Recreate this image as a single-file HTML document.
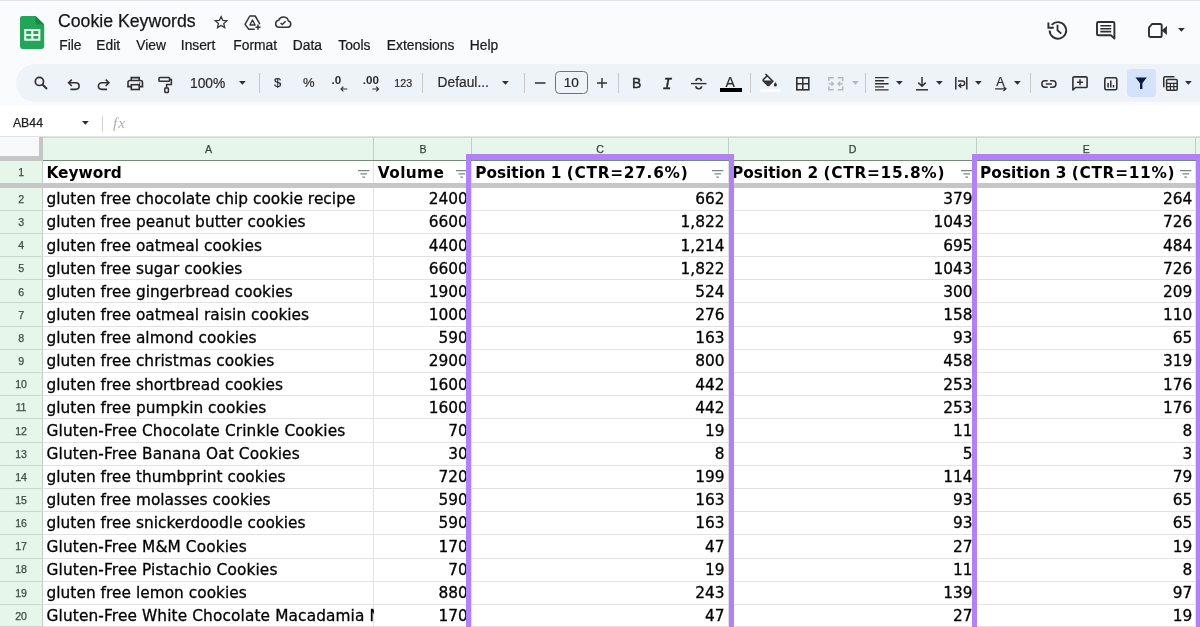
<!DOCTYPE html>
<html lang="en"><head><meta charset="utf-8"><title>Cookie Keywords - Google Sheets</title>
<style>
html,body{margin:0;padding:0}
body{width:1200px;height:627px;overflow:hidden;position:relative;background:#f9fbfd;font-family:"Liberation Sans",sans-serif;color:#1f1f1f}
#top,#grid{position:absolute;left:0;top:0;width:1200px;height:627px;overflow:hidden}
#top,#grid{will-change:transform}
.abs{position:absolute}
.topline{position:absolute;left:0;top:0;width:1200px;height:1.2px;background:#e2e3e6}
.title{position:absolute;left:58px;top:9.5px;font-size:17.7px;line-height:22px;color:#161616;-webkit-text-stroke:0.25px #161616;white-space:nowrap}
.menu{position:absolute;top:37.5px;font-size:13.8px;line-height:16px;color:#191919;-webkit-text-stroke:0.22px #191919;white-space:nowrap}
.tb{position:absolute;left:15.5px;top:63.8px;width:1300px;height:38.7px;border-radius:19.5px;background:#eef2f9}
.tbt{position:absolute;font-size:13.6px;line-height:16px;color:#2a2a2a;-webkit-text-stroke:0.2px #2a2a2a;white-space:nowrap}
.sep{position:absolute;top:72.5px;width:1px;height:20px;background:#c7c7c7}
.fbar{position:absolute;left:0;top:104.5px;width:1200px;height:32.5px;background:#fff;box-sizing:border-box;border-bottom:1px solid #e1e3e6}
svg{position:absolute;overflow:visible}
.chdr{position:absolute;left:0;width:1200px;background:#e6f6ea;box-sizing:border-box;border-top:1px solid #d0dbd3}
.corner{position:absolute;left:0;background:#f8f9fa}
.cl{position:absolute;text-align:center;font-size:10.6px;line-height:24px;color:#38433b;-webkit-text-stroke:0.25px #38433b}
.cvl{position:absolute;width:1px;background:#bfcfc2}
.rhdr{position:absolute;left:0;background:#e6f6ea;border-right:1px solid #bfcfc2;box-sizing:border-box}
.vl{position:absolute;width:1px;background:#e2e2e2}
.hl{position:absolute;left:0;width:1200px;height:1px;background:#e2e2e2}
.rn{position:absolute;left:0;width:42px;text-align:center;font-size:10.6px;color:#3f4a42;letter-spacing:-0.25px;-webkit-text-stroke:0.25px #3f4a42}
.rhl{position:absolute;left:0;width:43px;height:1px;background:#c9d8cc}
.c{position:absolute;box-sizing:border-box;font-family:"DejaVu Sans","Liberation Sans",sans-serif;font-size:15.35px;color:#000;white-space:nowrap;overflow:hidden}
.c.t{padding-left:3.5px;text-align:left;letter-spacing:0.04px;-webkit-text-stroke:0.3px #000}
.c.g{letter-spacing:0.125px}
.c.n{padding-right:4px;text-align:right;-webkit-text-stroke:0.3px #000}
.c.h{padding-left:3.5px;font-weight:bold;text-align:left}
.fi{position:absolute}
.fz{position:absolute;background:#c6c6c6}
.hbl{position:absolute;height:1px;background:#738a79}
.pb{position:absolute;box-sizing:border-box;border:5.9px solid #b081f7;border-top-width:6.5px}
.white{position:absolute;left:43px;top:160px;width:1157px;height:467px;background:#fff}
.ar{margin-left:0.4px;margin-top:0.2px}
.w{letter-spacing:0.72px}

</style></head><body>
<div id="top">
<div class="topline"></div>
<!-- sheets logo -->
<svg style="left:19.8px;top:16px" width="24.2" height="33" viewBox="0 0 24.2 33">
 <path d="M2.4 0H15.6L24.2 8.6V30.6A2.4 2.4 0 0 1 21.8 33H2.4A2.4 2.4 0 0 1 0 30.6V2.4A2.4 2.4 0 0 1 2.4 0Z" fill="#22a559"/>
 <path d="M15.6 0L24.2 8.6H17.8A2.2 2.2 0 0 1 15.6 6.4Z" fill="#17893f"/>
 <path d="M4.2 13H20.4V24.8H4.2ZM6.3 15.1V17.9H11.2V15.1ZM13.4 15.1V17.9H18.3V15.1ZM6.3 20V22.7H11.2V20ZM13.4 20V22.7H18.3V20Z" fill="#e9f6ee" fill-rule="evenodd"/>
</svg>
<div class="title">Cookie Keywords</div>
<!-- star -->
<svg style="left:214.2px;top:15.2px" width="14.2" height="13.6" viewBox="0 0 24 23"><path d="M12 2.6L14.8 9.1L21.9 9.7L16.5 14.4L18.1 21.3L12 17.6L5.9 21.3L7.5 14.4L2.1 9.7L9.2 9.1Z" fill="none" stroke="#333" stroke-width="2.1" stroke-linejoin="miter"/></svg>
<!-- drive add -->
<svg style="left:243.5px;top:14.5px" width="18" height="16" viewBox="0 0 18 16"><path d="M10.2 14.3H4.8L1 9.4L5.8 1H11.2L15.6 8.6" fill="none" stroke="#333" stroke-width="1.5" stroke-linejoin="round" stroke-linecap="round"/><path d="M5.9 10L8.5 5L11.1 10Z" fill="none" stroke="#333" stroke-width="1.4" stroke-linejoin="round"/><path d="M14 9.6V14.8M11.4 12.2H16.6" fill="none" stroke="#333" stroke-width="1.5"/></svg>
<!-- cloud done -->
<svg style="left:274px;top:16px" width="18" height="12" viewBox="0 0 18 12"><path d="M4.6 11.2H13.9A3.1 3.1 0 0 0 14.4 5.1A5.1 5.1 0 0 0 4.7 4.2A3.55 3.55 0 0 0 4.6 11.2Z" fill="none" stroke="#333" stroke-width="1.5" stroke-linejoin="round"/><path d="M6.6 6.9L8.3 8.6L11.6 5.2" fill="none" stroke="#333" stroke-width="1.4"/></svg>

<div class="menu" style="left:59.3px">File</div>
<div class="menu" style="left:96.3px">Edit</div>
<div class="menu" style="left:136.3px">View</div>
<div class="menu" style="left:180.8px">Insert</div>
<div class="menu" style="left:233.3px">Format</div>
<div class="menu" style="left:292.8px">Data</div>
<div class="menu" style="left:338.3px">Tools</div>
<div class="menu" style="left:386.8px">Extensions</div>
<div class="menu" style="left:469.8px">Help</div>

<!-- history -->
<svg style="left:1046px;top:19.5px" width="21" height="20" viewBox="0 0 21 20"><path d="M3.6 10.6A8.3 8.3 0 1 0 5.7 4.9" fill="none" stroke="#2e2e2e" stroke-width="1.9"/><path d="M2.4 2.4V7.8H7.8" fill="none" stroke="#2e2e2e" stroke-width="1.9"/><path d="M11.5 4.8V10.3L15.3 13.6" fill="none" stroke="#2e2e2e" stroke-width="1.8"/></svg>
<!-- comment -->
<svg style="left:1095.5px;top:20.8px" width="19.5" height="19" viewBox="0 0 19.5 19"><path d="M1 2.4A1.4 1.4 0 0 1 2.4 1H17A1.4 1.4 0 0 1 18.4 2.4V17.6L14.9 14.3H2.4A1.4 1.4 0 0 1 1 12.9Z" fill="none" stroke="#2e2e2e" stroke-width="1.9" stroke-linejoin="round"/><path d="M4.3 4.8H15.2M4.3 7.7H15.2M4.3 10.6H15.2" stroke="#2e2e2e" stroke-width="1.55"/></svg>
<!-- video -->
<svg style="left:1148px;top:22.8px" width="19.5" height="15" viewBox="0 0 19.5 15"><path d="M1 4.6L4 1H12.1A1.6 1.6 0 0 1 13.7 2.6V12.4A1.6 1.6 0 0 1 12.1 14H2.6A1.6 1.6 0 0 1 1 12.4Z" fill="none" stroke="#2e2e2e" stroke-width="1.9" stroke-linejoin="round"/><path d="M13.7 7.5L18.9 2.9V12.1Z" fill="#2e2e2e"/></svg>
<svg style="left:1177.5px;top:28px" width="6.8" height="3.7" viewBox="0 0 8 4.2"><path d="M0 0H8L4 4.2Z" fill="#2e2e2e"/></svg>

<!-- toolbar -->
<div class="tb"></div>
<div class="fbar"></div>
<!-- search -->
<svg style="left:33.5px;top:75.5px" width="14" height="14" viewBox="0 0 14 14"><circle cx="5.4" cy="5.4" r="4.1" fill="none" stroke="#303030" stroke-width="1.7"/><path d="M8.5 8.5L13 13" stroke="#303030" stroke-width="1.9"/></svg>
<!-- undo -->
<svg style="left:67px;top:77.5px" width="13.5" height="13" viewBox="0 0 13.5 13"><path d="M2 4.8H8.8A3.3 3.3 0 0 1 8.8 11.4H3.4" fill="none" stroke="#303030" stroke-width="1.6"/><path d="M4.8 1.6L1.6 4.8L4.8 8" fill="none" stroke="#303030" stroke-width="1.6"/></svg>
<!-- redo -->
<svg style="left:97px;top:77.5px" width="13.5" height="13" viewBox="0 0 13.5 13"><path d="M11.5 4.8H4.7A3.3 3.3 0 0 0 4.7 11.4H10.1" fill="none" stroke="#303030" stroke-width="1.6"/><path d="M8.7 1.6L11.9 4.8L8.7 8" fill="none" stroke="#303030" stroke-width="1.6"/></svg>
<!-- print -->
<svg style="left:127px;top:76.3px" width="16.5" height="14.5" viewBox="0 0 16.5 14.5"><path d="M4.3 4.6V1.6H12.2V4.6" fill="none" stroke="#303030" stroke-width="1.6"/><path d="M4 10.6H1V6.4A1.9 1.9 0 0 1 2.9 4.5H13.6A1.9 1.9 0 0 1 15.5 6.4V10.6H12.5" fill="none" stroke="#303030" stroke-width="1.6"/><rect x="4.3" y="8.7" width="7.9" height="4.8" fill="none" stroke="#303030" stroke-width="1.6"/><circle cx="12.8" cy="7" r="0.8" fill="#303030"/></svg>
<!-- paint format -->
<svg style="left:158px;top:75.5px" width="14.5" height="17.5" viewBox="0 0 14.5 17.5"><rect x="1" y="1.5" width="10.6" height="3.8" rx="0.9" fill="none" stroke="#303030" stroke-width="1.6"/><path d="M11.6 3.4H13.4V8.6H8.6V12" fill="none" stroke="#303030" stroke-width="1.5"/><rect x="6.8" y="12" width="3.6" height="4.4" rx="0.7" fill="none" stroke="#303030" stroke-width="1.5"/></svg>
<div class="tbt" style="left:190px;top:76.4px;font-size:13.8px">100%</div>
<svg class="ar" style="left:238.2px;top:81px" width="6.8" height="3.7" viewBox="0 0 8 4.2"><path d="M0 0H8L4 4.2Z" fill="#303030"/></svg>
<div class="sep" style="left:258.7px"></div>
<div class="tbt" style="left:274px;top:74.5px;font-size:13px">$</div>
<div class="tbt" style="left:303px;top:74.5px;font-size:13px">%</div>
<div class="tbt" style="left:331.5px;top:72px;font-size:11.6px;font-weight:bold;-webkit-text-stroke:0">.0</div>
<svg style="left:340.3px;top:85.5px" width="7.6" height="6" viewBox="0 0 9 7"><path d="M8.6 3.5H1.4M4 0.8L1.2 3.5L4 6.2" fill="none" stroke="#303030" stroke-width="1.3"/></svg>
<div class="tbt" style="left:362.8px;top:72px;font-size:11.6px;font-weight:bold;-webkit-text-stroke:0">.00</div>
<svg style="left:371.5px;top:85.5px" width="7.6" height="6" viewBox="0 0 9 7"><path d="M0.4 3.5H7.6M5 0.8L7.8 3.5L5 6.2" fill="none" stroke="#303030" stroke-width="1.3"/></svg>
<div class="tbt" style="left:394.3px;top:74.8px;font-size:10.7px">123</div>
<div class="sep" style="left:422px"></div>
<div class="tbt" style="left:437.5px;top:74.5px;font-size:13.8px">Defaul...</div>
<svg class="ar" style="left:501.9px;top:81px" width="6.8" height="3.7" viewBox="0 0 8 4.2"><path d="M0 0H8L4 4.2Z" fill="#303030"/></svg>
<div class="sep" style="left:523.7px"></div>
<svg style="left:535px;top:82px" width="10.5" height="2" viewBox="0 0 10.5 2"><path d="M0 1H10.5" stroke="#303030" stroke-width="1.5"/></svg>
<div class="abs" style="left:555px;top:70.9px;width:32.7px;height:23.4px;box-sizing:border-box;border:1px solid #6f7276;border-radius:4.5px"></div>
<div class="tbt" style="left:555px;top:75px;width:32.7px;text-align:center;font-size:13.6px;color:#1f1f1f">10</div>
<svg style="left:597px;top:78px" width="10" height="10" viewBox="0 0 10.5 10.5"><path d="M0 5.25H10.5M5.25 0V10.5" stroke="#303030" stroke-width="1.5"/></svg>
<div class="sep" style="left:618px"></div>
<div class="tbt" style="left:632.4px;top:75.3px;font-size:15.2px;color:#2a2a2a;-webkit-text-stroke:0.45px #2a2a2a;transform:scaleX(0.92);transform-origin:0 0">B</div>
<div class="tbt" style="left:662.5px;top:77.1px;font-size:16.4px;font-style:italic;font-family:'Liberation Mono',monospace;color:#2a2a2a;-webkit-text-stroke:0.35px #2a2a2a">I</div>
<!-- strikethrough -->
<svg style="left:691px;top:76.5px" width="15.5" height="13" viewBox="0 0 15.5 13"><path d="M0 6.6H15.5" stroke="#303030" stroke-width="1.4"/><path d="M10.5 4.2C10.3 2.4 9.2 1.5 7.7 1.5C6.1 1.5 5 2.4 5 3.9" fill="none" stroke="#303030" stroke-width="1.6"/><path d="M4.8 9.1C5 10.8 6.1 11.7 7.8 11.7C9.5 11.7 10.6 10.8 10.6 9.2" fill="none" stroke="#303030" stroke-width="1.6"/></svg>
<div class="tbt" style="left:725.4px;top:74px;font-size:14px;color:#2a2a2a">A</div>
<div class="abs" style="left:720px;top:88px;width:21.8px;height:3.7px;background:#000"></div>
<div class="sep" style="left:750.2px"></div>
<!-- fill -->
<svg style="left:762px;top:73px" width="17" height="15" viewBox="0 0 17 15"><path d="M3.5 1L10.8 8.3L7 12.1A1 1 0 0 1 5.6 12.1L1.4 7.9A1 1 0 0 1 1.4 6.5L5.7 2.2" fill="none" stroke="#303030" stroke-width="1.6"/><path d="M1.4 7.6H10.5L6.4 11.9Z" fill="#303030"/><path d="M13.4 9.2C13.4 9.2 11.9 10.9 11.9 11.9A1.5 1.5 0 0 0 14.9 11.9C14.9 10.9 13.4 9.2 13.4 9.2Z" fill="#303030"/></svg>
<div class="abs" style="left:759.5px;top:88.8px;width:21.8px;height:2.8px;background:#fbfcfe;border-radius:1.4px"></div>
<!-- borders -->
<svg style="left:795.5px;top:76.8px" width="13.6" height="13.6" viewBox="0 0 13.6 13.6"><rect x="0.8" y="0.8" width="12" height="12" fill="none" stroke="#303030" stroke-width="1.6"/><path d="M6.8 0.8V12.8M0.8 6.8H12.8" stroke="#303030" stroke-width="1.5"/></svg>
<!-- merge (disabled) -->
<svg style="left:827.5px;top:76.8px" width="15.5" height="13.6" viewBox="0 0 15.5 13.6"><path d="M0.8 4V0.8H5.6M9.9 0.8H14.7V4M14.7 9.6V12.8H9.9M5.6 12.8H0.8V9.6" fill="none" stroke="#b4b8bd" stroke-width="1.5"/><path d="M0.5 6.8H5.3M3.4 4.8L5.4 6.8L3.4 8.8M15 6.8H10.2M12.1 4.8L10.1 6.8L12.1 8.8" fill="none" stroke="#b4b8bd" stroke-width="1.3"/></svg>
<svg class="ar" style="left:851.2px;top:81px" width="6.8" height="3.7" viewBox="0 0 8 4.2"><path d="M0 0H8L4 4.2Z" fill="#b4b8bd"/></svg>
<div class="sep" style="left:865px"></div>
<!-- align -->
<svg style="left:874.8px;top:77.4px" width="13.6" height="13.6" viewBox="0 0 13.6 13.6"><path d="M0 0.7H13.6M0 3.75H9M0 6.8H13.6M0 9.85H9M0 12.9H13.6" stroke="#303030" stroke-width="1.35"/></svg>
<svg class="ar" style="left:895.7px;top:81px" width="6.8" height="3.7" viewBox="0 0 8 4.2"><path d="M0 0H8L4 4.2Z" fill="#303030"/></svg>
<!-- valign -->
<svg style="left:915.5px;top:76.8px" width="12" height="13.6" viewBox="0 0 12 13.6"><path d="M6 0V9M2.3 5.6L6 9.3L9.7 5.6" fill="none" stroke="#303030" stroke-width="1.5"/><path d="M0 12.8H12" stroke="#303030" stroke-width="1.5"/></svg>
<svg class="ar" style="left:935.2px;top:81px" width="6.8" height="3.7" viewBox="0 0 8 4.2"><path d="M0 0H8L4 4.2Z" fill="#303030"/></svg>
<!-- wrap -->
<svg style="left:954.5px;top:76.8px" width="12.6" height="12.6" viewBox="0 0 12.6 12.6"><path d="M0.8 0V12.6M11.8 0V12.6" stroke="#303030" stroke-width="1.5"/><path d="M3 4H7.4A2.1 2.1 0 0 1 7.4 8.6H4.4" fill="none" stroke="#303030" stroke-width="1.4"/><path d="M6.2 6.4L3.8 8.6L6.2 10.8" fill="none" stroke="#303030" stroke-width="1.4"/></svg>
<svg class="ar" style="left:974.5px;top:81px" width="6.8" height="3.7" viewBox="0 0 8 4.2"><path d="M0 0H8L4 4.2Z" fill="#303030"/></svg>
<!-- rotate -->
<div class="tbt" style="left:996.2px;top:73.6px;font-size:12.4px;color:#2a2a2a">A</div>
<svg style="left:994.8px;top:85.9px" width="12.4" height="5.6" viewBox="0 0 13 6"><path d="M0 3H11.5M9 0.6L11.6 3L9 5.4" fill="none" stroke="#303030" stroke-width="1.3"/></svg>
<svg class="ar" style="left:1013.8px;top:81px" width="6.8" height="3.7" viewBox="0 0 8 4.2"><path d="M0 0H8L4 4.2Z" fill="#303030"/></svg>
<div class="sep" style="left:1030px"></div>
<!-- link -->
<svg style="left:1041.2px;top:80.2px" width="15.8" height="8" viewBox="0 0 17 8.6"><path d="M7.2 0.9H4.3A3.4 3.4 0 0 0 4.3 7.7H7.2M9.8 0.9H12.7A3.4 3.4 0 0 1 12.7 7.7H9.8M5.2 4.3H11.8" fill="none" stroke="#303030" stroke-width="1.6"/></svg>
<!-- add comment -->
<svg style="left:1072px;top:75.5px" width="16" height="15.5" viewBox="0 0 16 15.5"><path d="M0.9 14V2A1.1 1.1 0 0 1 2 0.9H14A1.1 1.1 0 0 1 15.1 2V10.4A1.1 1.1 0 0 1 14 11.5H3.6Z" fill="none" stroke="#303030" stroke-width="1.6" stroke-linejoin="round"/><path d="M8 3.2V9.2M5 6.2H11" stroke="#303030" stroke-width="1.5"/></svg>
<!-- chart -->
<svg style="left:1103.5px;top:76.9px" width="13.6" height="13.6" viewBox="0 0 13.6 13.6"><rect x="0.8" y="0.8" width="12" height="12" rx="1.6" fill="none" stroke="#303030" stroke-width="1.6"/><path d="M4.1 6V10.4M6.8 3.4V10.4M9.5 8V10.4" stroke="#303030" stroke-width="1.5"/></svg>
<!-- filter (active) -->
<div class="abs" style="left:1127px;top:68.7px;width:28.5px;height:28px;border-radius:4px;background:#d5e2fc"></div>
<svg style="left:1135px;top:77.2px" width="12.4" height="12.4" viewBox="0 0 12.4 12.4"><path d="M0.6 0.4H11.8L7.4 6.2V12H5V6.2Z" fill="#0b1b44"/></svg>
<!-- filter views -->
<svg style="left:1162.5px;top:75.5px" width="15" height="15" viewBox="0 0 15 15"><path d="M0.8 11.2V2A1.2 1.2 0 0 1 2 0.8H11.4" fill="none" stroke="#303030" stroke-width="1.5"/><rect x="3.6" y="3.6" width="10.6" height="10.6" rx="1" fill="none" stroke="#303030" stroke-width="1.5"/><path d="M3.6 7.4H14.2M3.6 10.6H14.2M7.4 7.4V14.2M10.8 7.4V14.2" stroke="#303030" stroke-width="1.2"/></svg>
<svg class="ar" style="left:1184.4px;top:81px" width="6.8" height="3.7" viewBox="0 0 8 4.2"><path d="M0 0H8L4 4.2Z" fill="#303030"/></svg>

<!-- formula bar -->
<div class="tbt" style="left:12.9px;top:114.8px;font-size:12.3px;color:#1f1f1f;-webkit-text-stroke:0.25px #1f1f1f">AB44</div>
<svg class="ar" style="left:82px;top:121.2px" width="6.8" height="3.7" viewBox="0 0 8 4.2"><path d="M0 0H8L4 4.2Z" fill="#303030"/></svg>
<div class="abs" style="left:101.7px;top:116px;width:1px;height:15.5px;background:#d2d2d2"></div>
<div class="tbt" style="left:113px;top:114.5px;font-size:15.6px;letter-spacing:1px;font-style:italic;font-family:'Liberation Serif',serif;color:#adb0b3;-webkit-text-stroke:0">fx</div>
</div>

<div id="grid">
<div class="chdr" style="top:136.8px;height:24.19999999999999px"></div>
<div class="corner" style="top:136.8px;height:18.799999999999983px;width:39px"></div>
<div class="cl" style="left:43.0px;width:331.3px;top:136.8px;height:24.19999999999999px">A</div>
<div class="cvl" style="left:373.3px;top:136.8px;height:24.19999999999999px"></div>
<div class="cl" style="left:374.3px;width:97.39999999999998px;top:136.8px;height:24.19999999999999px">B</div>
<div class="cvl" style="left:470.7px;top:136.8px;height:24.19999999999999px"></div>
<div class="cl" style="left:471.7px;width:256.8px;top:136.8px;height:24.19999999999999px">C</div>
<div class="cvl" style="left:727.5px;top:136.8px;height:24.19999999999999px"></div>
<div class="cl" style="left:728.5px;width:248.10000000000002px;top:136.8px;height:24.19999999999999px">D</div>
<div class="cvl" style="left:975.6px;top:136.8px;height:24.19999999999999px"></div>
<div class="cl" style="left:976.6px;width:219.60000000000002px;top:136.8px;height:24.19999999999999px">E</div>
<div class="cvl" style="left:1195.2px;top:136.8px;height:24.19999999999999px"></div>
<div class="rhdr" style="top:161.0px;height:466.0px;width:43.0px"></div>
<div class="white"></div>
<div class="vl" style="left:373.3px;top:161.0px;height:466.0px"></div>
<div class="vl" style="left:470.7px;top:161.0px;height:466.0px"></div>
<div class="vl" style="left:727.5px;top:161.0px;height:466.0px"></div>
<div class="vl" style="left:975.6px;top:161.0px;height:466.0px"></div>
<div class="vl" style="left:1195.2px;top:161.0px;height:466.0px"></div>
<div class="rn" style="top:161.0px;height:22.30000000000001px;line-height:22.30000000000001px">1</div>
<div class="c h" style="left:43.0px;width:331.3px;top:161.5px;height:22.30000000000001px;line-height:22.30000000000001px;letter-spacing:0px">Keyword</div>
<svg class="fi" style="left:358.2px;top:170.0px" width="11.4" height="8" viewBox="0 0 11.4 8"><path d="M0 0.7H11.4M2.4 3.9H9M4.4 7.1H7" stroke="#748a7a" stroke-width="1.3" fill="none"/></svg>
<div class="c h" style="left:374.3px;width:97.39999999999998px;top:161.5px;height:22.30000000000001px;line-height:22.30000000000001px;letter-spacing:0.38px">Volume</div>
<svg class="fi" style="left:455.6px;top:170.0px" width="11.4" height="8" viewBox="0 0 11.4 8"><path d="M0 0.7H11.4M2.4 3.9H9M4.4 7.1H7" stroke="#748a7a" stroke-width="1.3" fill="none"/></svg>
<div class="c h" style="left:471.7px;width:256.8px;top:161.5px;height:22.30000000000001px;line-height:22.30000000000001px;letter-spacing:0px">Position 1 <span class="w">(CTR=27.6%)</span></div>
<svg class="fi" style="left:712.4px;top:170.0px" width="11.4" height="8" viewBox="0 0 11.4 8"><path d="M0 0.7H11.4M2.4 3.9H9M4.4 7.1H7" stroke="#748a7a" stroke-width="1.3" fill="none"/></svg>
<div class="c h" style="left:728.5px;width:248.10000000000002px;top:161.5px;height:22.30000000000001px;line-height:22.30000000000001px;letter-spacing:0px">Position 2 <span class="w">(CTR=15.8%)</span></div>
<svg class="fi" style="left:960.5px;top:170.0px" width="11.4" height="8" viewBox="0 0 11.4 8"><path d="M0 0.7H11.4M2.4 3.9H9M4.4 7.1H7" stroke="#748a7a" stroke-width="1.3" fill="none"/></svg>
<div class="c h" style="left:976.6px;width:219.60000000000002px;top:161.5px;height:22.30000000000001px;line-height:22.30000000000001px;letter-spacing:0px">Position 3 <span class="w">(CTR=11%)</span></div>
<svg class="fi" style="left:1180.1px;top:170.0px" width="11.4" height="8" viewBox="0 0 11.4 8"><path d="M0 0.7H11.4M2.4 3.9H9M4.4 7.1H7" stroke="#748a7a" stroke-width="1.3" fill="none"/></svg>
<div class="hl" style="top:210px"></div>
<div class="rhl" style="top:210px"></div>
<div class="rn" style="top:187.90px;height:23.16px;line-height:23.16px">2</div>
<div class="c t" style="left:43.0px;width:331.3px;top:188.25px;height:23.16px;line-height:23.16px">gluten free chocolate chip cookie recipe</div>
<div class="c n" style="left:374.3px;width:97.39999999999998px;top:188.25px;height:23.16px;line-height:23.16px">2400</div>
<div class="c n" style="left:471.7px;width:256.8px;top:188.25px;height:23.16px;line-height:23.16px">662</div>
<div class="c n" style="left:728.5px;width:248.10000000000002px;top:188.25px;height:23.16px;line-height:23.16px">379</div>
<div class="c n" style="left:976.6px;width:219.60000000000002px;top:188.25px;height:23.16px;line-height:23.16px">264</div>
<div class="hl" style="top:233px"></div>
<div class="rhl" style="top:233px"></div>
<div class="rn" style="top:211.06px;height:23.16px;line-height:23.16px">3</div>
<div class="c t" style="left:43.0px;width:331.3px;top:211.41px;height:23.16px;line-height:23.16px">gluten free peanut butter cookies</div>
<div class="c n" style="left:374.3px;width:97.39999999999998px;top:211.41px;height:23.16px;line-height:23.16px">6600</div>
<div class="c n" style="left:471.7px;width:256.8px;top:211.41px;height:23.16px;line-height:23.16px">1,822</div>
<div class="c n" style="left:728.5px;width:248.10000000000002px;top:211.41px;height:23.16px;line-height:23.16px">1043</div>
<div class="c n" style="left:976.6px;width:219.60000000000002px;top:211.41px;height:23.16px;line-height:23.16px">726</div>
<div class="hl" style="top:256px"></div>
<div class="rhl" style="top:256px"></div>
<div class="rn" style="top:234.22px;height:23.16px;line-height:23.16px">4</div>
<div class="c t" style="left:43.0px;width:331.3px;top:234.57px;height:23.16px;line-height:23.16px">gluten free oatmeal cookies</div>
<div class="c n" style="left:374.3px;width:97.39999999999998px;top:234.57px;height:23.16px;line-height:23.16px">4400</div>
<div class="c n" style="left:471.7px;width:256.8px;top:234.57px;height:23.16px;line-height:23.16px">1,214</div>
<div class="c n" style="left:728.5px;width:248.10000000000002px;top:234.57px;height:23.16px;line-height:23.16px">695</div>
<div class="c n" style="left:976.6px;width:219.60000000000002px;top:234.57px;height:23.16px;line-height:23.16px">484</div>
<div class="hl" style="top:279px"></div>
<div class="rhl" style="top:279px"></div>
<div class="rn" style="top:257.38px;height:23.16px;line-height:23.16px">5</div>
<div class="c t" style="left:43.0px;width:331.3px;top:257.73px;height:23.16px;line-height:23.16px">gluten free sugar cookies</div>
<div class="c n" style="left:374.3px;width:97.39999999999998px;top:257.73px;height:23.16px;line-height:23.16px">6600</div>
<div class="c n" style="left:471.7px;width:256.8px;top:257.73px;height:23.16px;line-height:23.16px">1,822</div>
<div class="c n" style="left:728.5px;width:248.10000000000002px;top:257.73px;height:23.16px;line-height:23.16px">1043</div>
<div class="c n" style="left:976.6px;width:219.60000000000002px;top:257.73px;height:23.16px;line-height:23.16px">726</div>
<div class="hl" style="top:302px"></div>
<div class="rhl" style="top:302px"></div>
<div class="rn" style="top:280.54px;height:23.16px;line-height:23.16px">6</div>
<div class="c t" style="left:43.0px;width:331.3px;top:280.89px;height:23.16px;line-height:23.16px">gluten free gingerbread cookies</div>
<div class="c n" style="left:374.3px;width:97.39999999999998px;top:280.89px;height:23.16px;line-height:23.16px">1900</div>
<div class="c n" style="left:471.7px;width:256.8px;top:280.89px;height:23.16px;line-height:23.16px">524</div>
<div class="c n" style="left:728.5px;width:248.10000000000002px;top:280.89px;height:23.16px;line-height:23.16px">300</div>
<div class="c n" style="left:976.6px;width:219.60000000000002px;top:280.89px;height:23.16px;line-height:23.16px">209</div>
<div class="hl" style="top:326px"></div>
<div class="rhl" style="top:326px"></div>
<div class="rn" style="top:303.70px;height:23.16px;line-height:23.16px">7</div>
<div class="c t" style="left:43.0px;width:331.3px;top:304.05px;height:23.16px;line-height:23.16px">gluten free oatmeal raisin cookies</div>
<div class="c n" style="left:374.3px;width:97.39999999999998px;top:304.05px;height:23.16px;line-height:23.16px">1000</div>
<div class="c n" style="left:471.7px;width:256.8px;top:304.05px;height:23.16px;line-height:23.16px">276</div>
<div class="c n" style="left:728.5px;width:248.10000000000002px;top:304.05px;height:23.16px;line-height:23.16px">158</div>
<div class="c n" style="left:976.6px;width:219.60000000000002px;top:304.05px;height:23.16px;line-height:23.16px">110</div>
<div class="hl" style="top:349px"></div>
<div class="rhl" style="top:349px"></div>
<div class="rn" style="top:326.86px;height:23.16px;line-height:23.16px">8</div>
<div class="c t" style="left:43.0px;width:331.3px;top:327.21px;height:23.16px;line-height:23.16px">gluten free almond cookies</div>
<div class="c n" style="left:374.3px;width:97.39999999999998px;top:327.21px;height:23.16px;line-height:23.16px">590</div>
<div class="c n" style="left:471.7px;width:256.8px;top:327.21px;height:23.16px;line-height:23.16px">163</div>
<div class="c n" style="left:728.5px;width:248.10000000000002px;top:327.21px;height:23.16px;line-height:23.16px">93</div>
<div class="c n" style="left:976.6px;width:219.60000000000002px;top:327.21px;height:23.16px;line-height:23.16px">65</div>
<div class="hl" style="top:372px"></div>
<div class="rhl" style="top:372px"></div>
<div class="rn" style="top:350.02px;height:23.16px;line-height:23.16px">9</div>
<div class="c t" style="left:43.0px;width:331.3px;top:350.37px;height:23.16px;line-height:23.16px">gluten free christmas cookies</div>
<div class="c n" style="left:374.3px;width:97.39999999999998px;top:350.37px;height:23.16px;line-height:23.16px">2900</div>
<div class="c n" style="left:471.7px;width:256.8px;top:350.37px;height:23.16px;line-height:23.16px">800</div>
<div class="c n" style="left:728.5px;width:248.10000000000002px;top:350.37px;height:23.16px;line-height:23.16px">458</div>
<div class="c n" style="left:976.6px;width:219.60000000000002px;top:350.37px;height:23.16px;line-height:23.16px">319</div>
<div class="hl" style="top:395px"></div>
<div class="rhl" style="top:395px"></div>
<div class="rn" style="top:373.18px;height:23.16px;line-height:23.16px">10</div>
<div class="c t" style="left:43.0px;width:331.3px;top:373.53px;height:23.16px;line-height:23.16px">gluten free shortbread cookies</div>
<div class="c n" style="left:374.3px;width:97.39999999999998px;top:373.53px;height:23.16px;line-height:23.16px">1600</div>
<div class="c n" style="left:471.7px;width:256.8px;top:373.53px;height:23.16px;line-height:23.16px">442</div>
<div class="c n" style="left:728.5px;width:248.10000000000002px;top:373.53px;height:23.16px;line-height:23.16px">253</div>
<div class="c n" style="left:976.6px;width:219.60000000000002px;top:373.53px;height:23.16px;line-height:23.16px">176</div>
<div class="hl" style="top:418px"></div>
<div class="rhl" style="top:418px"></div>
<div class="rn" style="top:396.34px;height:23.16px;line-height:23.16px">11</div>
<div class="c t" style="left:43.0px;width:331.3px;top:396.69px;height:23.16px;line-height:23.16px">gluten free pumpkin cookies</div>
<div class="c n" style="left:374.3px;width:97.39999999999998px;top:396.69px;height:23.16px;line-height:23.16px">1600</div>
<div class="c n" style="left:471.7px;width:256.8px;top:396.69px;height:23.16px;line-height:23.16px">442</div>
<div class="c n" style="left:728.5px;width:248.10000000000002px;top:396.69px;height:23.16px;line-height:23.16px">253</div>
<div class="c n" style="left:976.6px;width:219.60000000000002px;top:396.69px;height:23.16px;line-height:23.16px">176</div>
<div class="hl" style="top:442px"></div>
<div class="rhl" style="top:442px"></div>
<div class="rn" style="top:419.50px;height:23.16px;line-height:23.16px">12</div>
<div class="c t g" style="left:43.0px;width:331.3px;top:419.85px;height:23.16px;line-height:23.16px">Gluten-Free Chocolate Crinkle Cookies</div>
<div class="c n" style="left:374.3px;width:97.39999999999998px;top:419.85px;height:23.16px;line-height:23.16px">70</div>
<div class="c n" style="left:471.7px;width:256.8px;top:419.85px;height:23.16px;line-height:23.16px">19</div>
<div class="c n" style="left:728.5px;width:248.10000000000002px;top:419.85px;height:23.16px;line-height:23.16px">11</div>
<div class="c n" style="left:976.6px;width:219.60000000000002px;top:419.85px;height:23.16px;line-height:23.16px">8</div>
<div class="hl" style="top:465px"></div>
<div class="rhl" style="top:465px"></div>
<div class="rn" style="top:442.66px;height:23.16px;line-height:23.16px">13</div>
<div class="c t g" style="left:43.0px;width:331.3px;top:443.01px;height:23.16px;line-height:23.16px">Gluten-Free Banana Oat Cookies</div>
<div class="c n" style="left:374.3px;width:97.39999999999998px;top:443.01px;height:23.16px;line-height:23.16px">30</div>
<div class="c n" style="left:471.7px;width:256.8px;top:443.01px;height:23.16px;line-height:23.16px">8</div>
<div class="c n" style="left:728.5px;width:248.10000000000002px;top:443.01px;height:23.16px;line-height:23.16px">5</div>
<div class="c n" style="left:976.6px;width:219.60000000000002px;top:443.01px;height:23.16px;line-height:23.16px">3</div>
<div class="hl" style="top:488px"></div>
<div class="rhl" style="top:488px"></div>
<div class="rn" style="top:465.82px;height:23.16px;line-height:23.16px">14</div>
<div class="c t" style="left:43.0px;width:331.3px;top:466.17px;height:23.16px;line-height:23.16px">gluten free thumbprint cookies</div>
<div class="c n" style="left:374.3px;width:97.39999999999998px;top:466.17px;height:23.16px;line-height:23.16px">720</div>
<div class="c n" style="left:471.7px;width:256.8px;top:466.17px;height:23.16px;line-height:23.16px">199</div>
<div class="c n" style="left:728.5px;width:248.10000000000002px;top:466.17px;height:23.16px;line-height:23.16px">114</div>
<div class="c n" style="left:976.6px;width:219.60000000000002px;top:466.17px;height:23.16px;line-height:23.16px">79</div>
<div class="hl" style="top:511px"></div>
<div class="rhl" style="top:511px"></div>
<div class="rn" style="top:488.98px;height:23.16px;line-height:23.16px">15</div>
<div class="c t" style="left:43.0px;width:331.3px;top:489.33px;height:23.16px;line-height:23.16px">gluten free molasses cookies</div>
<div class="c n" style="left:374.3px;width:97.39999999999998px;top:489.33px;height:23.16px;line-height:23.16px">590</div>
<div class="c n" style="left:471.7px;width:256.8px;top:489.33px;height:23.16px;line-height:23.16px">163</div>
<div class="c n" style="left:728.5px;width:248.10000000000002px;top:489.33px;height:23.16px;line-height:23.16px">93</div>
<div class="c n" style="left:976.6px;width:219.60000000000002px;top:489.33px;height:23.16px;line-height:23.16px">65</div>
<div class="hl" style="top:534px"></div>
<div class="rhl" style="top:534px"></div>
<div class="rn" style="top:512.14px;height:23.16px;line-height:23.16px">16</div>
<div class="c t" style="left:43.0px;width:331.3px;top:512.49px;height:23.16px;line-height:23.16px">gluten free snickerdoodle cookies</div>
<div class="c n" style="left:374.3px;width:97.39999999999998px;top:512.49px;height:23.16px;line-height:23.16px">590</div>
<div class="c n" style="left:471.7px;width:256.8px;top:512.49px;height:23.16px;line-height:23.16px">163</div>
<div class="c n" style="left:728.5px;width:248.10000000000002px;top:512.49px;height:23.16px;line-height:23.16px">93</div>
<div class="c n" style="left:976.6px;width:219.60000000000002px;top:512.49px;height:23.16px;line-height:23.16px">65</div>
<div class="hl" style="top:558px"></div>
<div class="rhl" style="top:558px"></div>
<div class="rn" style="top:535.30px;height:23.16px;line-height:23.16px">17</div>
<div class="c t g" style="left:43.0px;width:331.3px;top:535.65px;height:23.16px;line-height:23.16px">Gluten-Free M&amp;M Cookies</div>
<div class="c n" style="left:374.3px;width:97.39999999999998px;top:535.65px;height:23.16px;line-height:23.16px">170</div>
<div class="c n" style="left:471.7px;width:256.8px;top:535.65px;height:23.16px;line-height:23.16px">47</div>
<div class="c n" style="left:728.5px;width:248.10000000000002px;top:535.65px;height:23.16px;line-height:23.16px">27</div>
<div class="c n" style="left:976.6px;width:219.60000000000002px;top:535.65px;height:23.16px;line-height:23.16px">19</div>
<div class="hl" style="top:581px"></div>
<div class="rhl" style="top:581px"></div>
<div class="rn" style="top:558.46px;height:23.16px;line-height:23.16px">18</div>
<div class="c t g" style="left:43.0px;width:331.3px;top:558.81px;height:23.16px;line-height:23.16px">Gluten-Free Pistachio Cookies</div>
<div class="c n" style="left:374.3px;width:97.39999999999998px;top:558.81px;height:23.16px;line-height:23.16px">70</div>
<div class="c n" style="left:471.7px;width:256.8px;top:558.81px;height:23.16px;line-height:23.16px">19</div>
<div class="c n" style="left:728.5px;width:248.10000000000002px;top:558.81px;height:23.16px;line-height:23.16px">11</div>
<div class="c n" style="left:976.6px;width:219.60000000000002px;top:558.81px;height:23.16px;line-height:23.16px">8</div>
<div class="hl" style="top:604px"></div>
<div class="rhl" style="top:604px"></div>
<div class="rn" style="top:581.62px;height:23.16px;line-height:23.16px">19</div>
<div class="c t" style="left:43.0px;width:331.3px;top:581.97px;height:23.16px;line-height:23.16px">gluten free lemon cookies</div>
<div class="c n" style="left:374.3px;width:97.39999999999998px;top:581.97px;height:23.16px;line-height:23.16px">880</div>
<div class="c n" style="left:471.7px;width:256.8px;top:581.97px;height:23.16px;line-height:23.16px">243</div>
<div class="c n" style="left:728.5px;width:248.10000000000002px;top:581.97px;height:23.16px;line-height:23.16px">139</div>
<div class="c n" style="left:976.6px;width:219.60000000000002px;top:581.97px;height:23.16px;line-height:23.16px">97</div>
<div class="hl" style="top:626px"></div>
<div class="rhl" style="top:626px"></div>
<div class="rn" style="top:604.78px;height:23.16px;line-height:23.16px">20</div>
<div class="c t g" style="left:43.0px;width:331.3px;top:605.13px;height:23.16px;line-height:23.16px">Gluten-Free White Chocolate Macadamia Nut Cookies</div>
<div class="c n" style="left:374.3px;width:97.39999999999998px;top:605.13px;height:23.16px;line-height:23.16px">170</div>
<div class="c n" style="left:471.7px;width:256.8px;top:605.13px;height:23.16px;line-height:23.16px">47</div>
<div class="c n" style="left:728.5px;width:248.10000000000002px;top:605.13px;height:23.16px;line-height:23.16px">27</div>
<div class="c n" style="left:976.6px;width:219.60000000000002px;top:605.13px;height:23.16px;line-height:23.16px">19</div>
<div class="fz" style="left:0;top:183.3px;width:1200px;height:4.299999999999983px"></div>
<div class="fz" style="left:39px;top:136.8px;width:4px;height:24.19999999999999px"></div>
<div class="fz" style="left:0;top:155.6px;width:43px;height:5.400000000000006px"></div>
<div class="hbl" style="left:43px;top:160.0px;width:1157px"></div>
<div class="pb" style="left:466.4px;top:154.2px;width:267.9px;height:500px"></div>
<div class="pb" style="left:971.5px;top:154.2px;width:229.5px;height:500px"></div>
</div>
</body></html>
